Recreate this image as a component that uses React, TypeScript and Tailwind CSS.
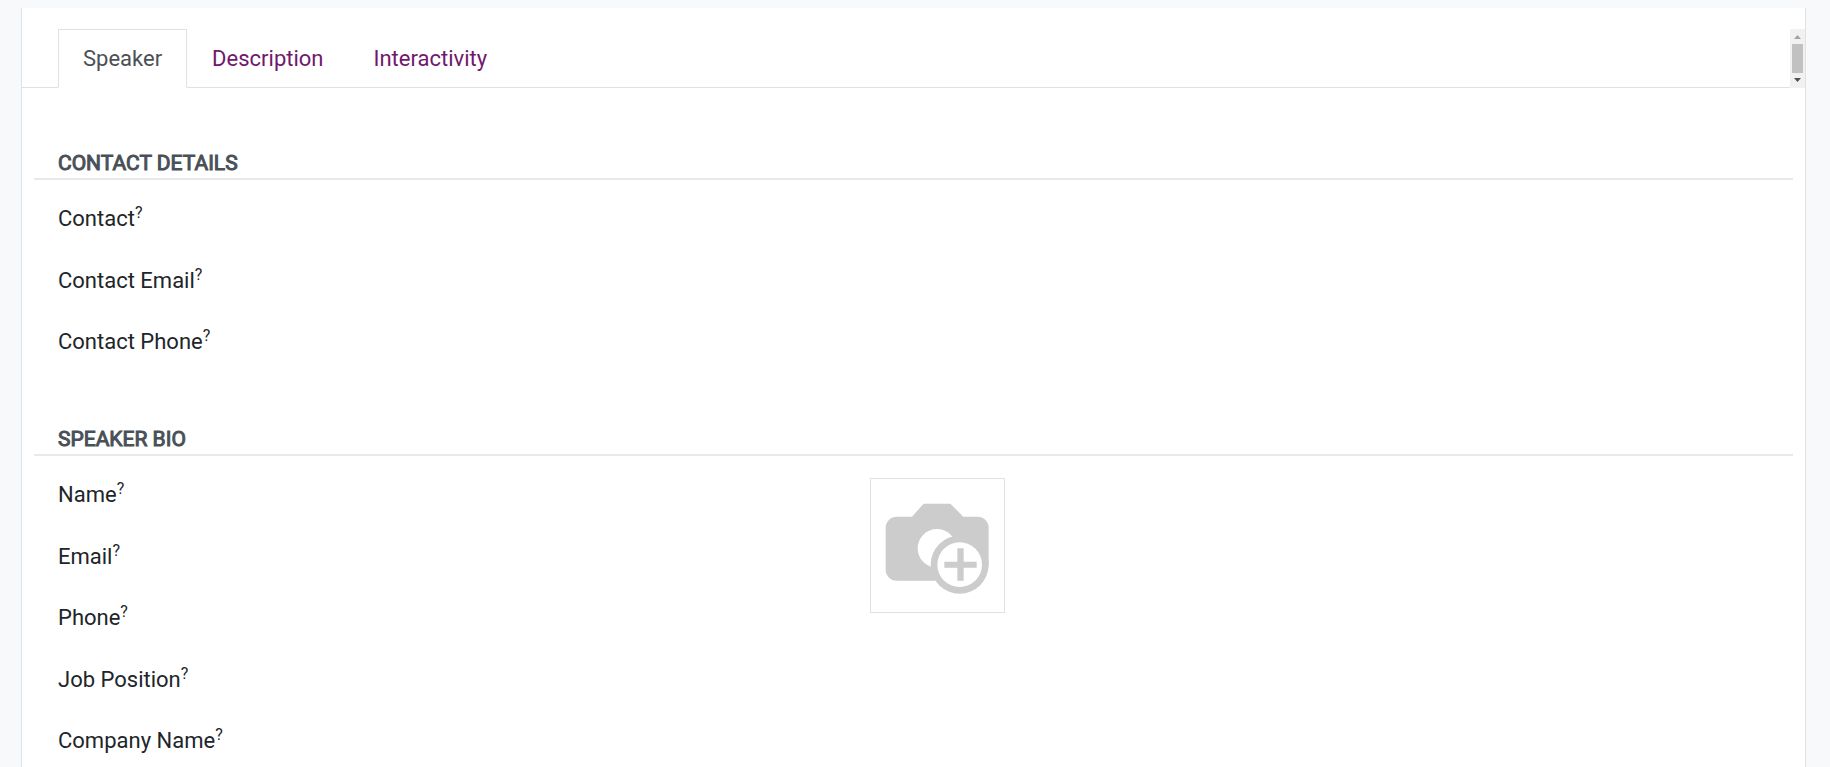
import { useState } from "react";

const tabs = ["Speaker", "Description", "Interactivity"];

const contactFields = [
  { id: "contact", label: "Contact", type: "text" },
  { id: "contact-email", label: "Contact Email", type: "email" },
  { id: "contact-phone", label: "Contact Phone", type: "tel" },
];

const bioFields = [
  { id: "name", label: "Name", type: "text" },
  { id: "email", label: "Email", type: "email" },
  { id: "phone", label: "Phone", type: "tel" },
  { id: "job-position", label: "Job Position", type: "text" },
  { id: "company-name", label: "Company Name", type: "text" },
];

type FieldInfo = { id: string; label: string; type: string };

function Fields({ fields }: { fields: FieldInfo[] }) {
  return (
    <div className="flex flex-col">
      {fields.map((field) => (
        <div key={field.id} className="flex items-start odd:h-[62px] even:h-[61px]">
          <label htmlFor={field.id} className="w-60 shrink-0 leading-[34px] whitespace-nowrap">
            {field.label}
            <sup className="text-[16px]">?</sup>
          </label>
          <input id={field.id} type={field.type} className="h-8 min-w-0 flex-1 bg-transparent outline-none" />
        </div>
      ))}
    </div>
  );
}

function SectionTitle({ children }: { children: string }) {
  return (
    <h2 className="border-b-2 border-[#e8e9ea] px-6 text-[21px] leading-[30px] text-[#495057] uppercase [-webkit-text-stroke:1px_#495057]">
      {children}
    </h2>
  );
}

function CameraIcon() {
  return (
    <svg viewBox="3 3 399 399" className="h-full w-full" aria-hidden="true">
      <path
        d="M80 116H126L161 77H241L280 116H323A33 33 0 0 1 356 149V260L269 308H80A33 33 0 0 1 47 275V149A33 33 0 0 1 80 116Z"
        fill="#ccc"
      />
      <circle cx="201" cy="211" r="58" fill="#fff" />
      <circle cx="269" cy="260" r="87" fill="#ccc" />
      <circle cx="269" cy="260" r="67" fill="#fff" />
      <path d="M262 211H281V251H320V269H281V308H262V269H223V251H262Z" fill="#ccc" />
    </svg>
  );
}

function TabScrollbar() {
  return (
    <div className="flex w-[15px] flex-col items-center justify-between bg-[#f1f1f1]" aria-hidden="true">
      <svg viewBox="0 0 15 15" className="h-[15px] w-[15px]">
        <path d="M4 10L7.5 6L11 10Z" fill="#a3a3a3" />
      </svg>
      <div className="w-[11px] flex-1 bg-[#c1c1c1]" />
      <svg viewBox="0 0 15 15" className="h-[15px] w-[15px]">
        <path d="M4 5L7.5 9L11 5Z" fill="#505050" />
      </svg>
    </div>
  );
}

export default function App() {
  const [active, setActive] = useState("Speaker");

  return (
    <div className="h-screen overflow-hidden bg-[#f8f9fa] pt-2 pr-6 pl-[21px] font-['Roboto',sans-serif] text-[22px] text-[#212529]">
      <main className="min-h-full border-x border-[#dee2e6] bg-white pt-[21px]">
        <div className="flex">
          <div role="tablist" className="flex flex-1 border-b border-[#dee2e6] pl-9">
            {tabs.map((tab) => (
              <button
                key={tab}
                type="button"
                role="tab"
                aria-selected={tab === active}
                onClick={() => setActive(tab)}
                className={
                  tab === active
                    ? "-mb-px border border-[#dee2e6] border-b-white bg-white px-6 py-3 leading-[33px] text-[#495057]"
                    : "-mb-px border border-transparent px-6 py-3 leading-[33px] text-[#71186c]"
                }
              >
                {tab}
              </button>
            ))}
          </div>
          <TabScrollbar />
        </div>

        <div className="flex flex-col gap-[37px] px-3 pt-[60px]">
          <section>
            <SectionTitle>Contact Details</SectionTitle>
            <div className="pt-[22px] pl-6">
              <Fields fields={contactFields} />
            </div>
          </section>
          <section>
            <SectionTitle>Speaker Bio</SectionTitle>
            <div className="grid grid-cols-[22fr_25fr] pt-[22px] pl-6">
              <Fields fields={bioFields} />
              <button type="button" aria-label="Upload photo" className="h-[135px] w-[135px] border border-[#dee2e6]">
                <CameraIcon />
              </button>
            </div>
          </section>
        </div>
      </main>
    </div>
  );
}
